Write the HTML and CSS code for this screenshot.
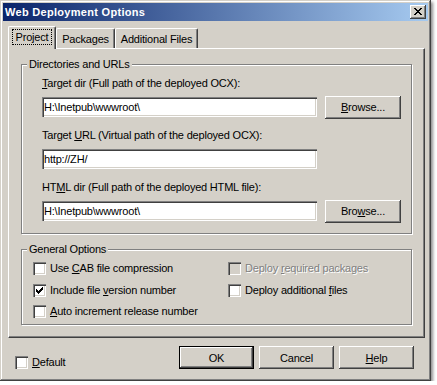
FILE: index.html
```html
<!DOCTYPE html>
<html lang="en">
<head>
  <meta charset="UTF-8" />
  <title>Web Deployment Options</title>
  <link rel="stylesheet" href="styles.css">
</head>
<body>
  <div class="window">
    <!-- Title bar -->
    <div class="titlebar">
      <span class="title">Web Deployment Options</span>
      <span class="close">
        <svg width="8" height="7" viewBox="0 0 8 7" shape-rendering="crispEdges">
          <path fill="#000" d="M0 0h2v1H0zM6 0h2v1H6zM1 1h2v1H1zM5 1h2v1H5zM2 2h4v1H2zM3 3h2v1H3zM2 4h4v1H2zM1 5h2v1H1zM5 5h2v1H5zM0 6h2v1H0zM6 6h2v1H6z"/>
        </svg>
      </span>
    </div>

    <div class="content">
      <!-- Tabs -->
      <div class="tabs">
        <div class="tab active"><span class="focus">Project</span></div>
        <div class="tab packages">Packages</div>
        <div class="tab files">Additional Files</div>
      </div>

      <div class="panel">
        <fieldset class="group dirs">
          <legend>Directories and URLs</legend>
          <div class="label"><u>T</u>arget dir (Full path of the deployed OCX):</div>
          <div class="row">
            <input class="textbox" type="text" value="H:\Inetpub\wwwroot\" readonly>
            <button class="btn"><u>B</u>rowse...</button>
          </div>
          <div class="label">Target <u>U</u>RL (Virtual path of the deployed OCX):</div>
          <div class="row">
            <input class="textbox" type="text" value="http://ZH/" readonly>
          </div>
          <div class="label">HT<u>M</u>L dir (Full path of the deployed HTML file):</div>
          <div class="row">
            <input class="textbox" type="text" value="H:\Inetpub\wwwroot\" readonly>
            <button class="btn">Bro<u>w</u>se...</button>
          </div>
        </fieldset>

        <fieldset class="group options">
          <legend>General Options</legend>
          <div class="checks">
            <label class="check"><span class="box"></span><span>Use <u>C</u>AB file compression</span></label>
            <label class="check disabled"><span class="box"></span><span>Deploy <u>r</u>equired packages</span></label>
            <label class="check">
              <span class="box">
                <svg width="13" height="13" viewBox="0 0 13 13" shape-rendering="crispEdges">
                  <path fill="#000" d="M3 5h1v3H3zM4 6h1v3H4zM5 7h1v3H5zM6 6h1v3H6zM7 5h1v3H7zM8 4h1v3H8zM9 3h1v3H9z"/>
                </svg>
              </span><span>Include file <u>v</u>ersion number</span>
            </label>
            <label class="check"><span class="box"></span><span>Deploy additional <u>f</u>iles</span></label>
            <label class="check"><span class="box"></span><span><u>A</u>uto increment release number</span></label>
          </div>
        </fieldset>
      </div>

      <!-- Bottom buttons -->
      <div class="footer">
        <label class="check default-check"><span class="box"></span><span><u>D</u>efault</span></label>
        <div class="buttons">
          <button class="btn default">OK</button>
          <button class="btn">Cancel</button>
          <button class="btn"><u>H</u>elp</button>
        </div>
      </div>
    </div>
  </div>
</body>
</html>
```
FILE: styles.css
```css
body {
  margin: 0;
  background: #ffffff;
  font-family: "Liberation Sans", Arial, sans-serif;
  font-size: 11px;
  letter-spacing: -0.2px;
  color: #000000;
}
.window {
  width: 431px;
  height: 381px;
  box-sizing: border-box;
  padding: 3px;
  background: #d4d0c8;
  display: flex;
  flex-direction: column;
  box-shadow: inset -1px -1px #404040, inset 1px 1px #d4d0c8,
              inset -2px -2px #808080, inset 2px 2px #ffffff,
              2px 2px 3px rgba(0, 0, 0, 0.45);
}
.titlebar {
  height: 18px;
  display: flex;
  align-items: center;
  justify-content: space-between;
  padding: 0 2px 0 2px;
  background: linear-gradient(to right, #0a246a, #a6caf0);
  color: #ffffff;
  font-weight: bold;
  letter-spacing: 0.3px;
}
.close {
  width: 16px;
  height: 14px;
  box-sizing: border-box;
  padding: 3px 0 0 4px;
  background: #d4d0c8;
  box-shadow: inset -1px -1px #404040, inset 1px 1px #ffffff,
              inset -2px -2px #808080, inset 2px 2px #d4d0c8;
}
.close svg { display: block; }
.content {
  flex: 1;
  display: flex;
  flex-direction: column;
  padding: 5px 3px 0 5px;
}

/* tabs */
.tabs {
  display: flex;
  align-items: flex-end;
  height: 22px;
  position: relative;
  z-index: 1;
}
.tab {
  height: 20px;
  box-sizing: border-box;
  padding-top: 4px;
  line-height: 13px;
  text-align: center;
  background: #d4d0c8;
  border-top: 1px solid #ffffff;
  border-left: 1px solid #ffffff;
  border-right: 1px solid #404040;
  border-radius: 2px 2px 0 0;
  box-shadow: inset -1px 0 #808080;
}
.tab.active {
  width: 48px;
  height: 23px;
  margin-bottom: -1px;
  padding-top: 2px;
}
.tab.packages { width: 59px; }
.tab.files { width: 83px; }
.focus {
  display: inline-block;
  border: 1px dotted #000000;
  padding: 1px 3px 0;
}

.panel {
  height: 290px;
  box-sizing: border-box;
  padding: 9px 12px 0 12px;
  background: #d4d0c8;
  border-top: 1px solid #ffffff;
  border-left: 1px solid #ffffff;
  border-right: 1px solid #404040;
  border-bottom: 1px solid #404040;
  box-shadow: inset -1px -1px #808080;
}

/* group boxes */
.group {
  margin: 0;
  min-width: 0;
  border: 1px solid #808080;
  box-shadow: 1px 1px 0 #ffffff, inset 1px 1px 0 #ffffff;
}
.group legend {
  padding: 0 2px;
  line-height: 13px;
  background: #d4d0c8;
}
.dirs { padding: 6px 10px 12px 20px; }
.dirs legend { margin-left: -15px; }
.options {
  margin-top: 9px;
  padding: 6px 10px 6px 11px;
}
.options legend { margin-left: -6px; }
.label {
  line-height: 13px;
  margin-bottom: 7px;
}
.row {
  display: flex;
  align-items: center;
  gap: 8px;
  height: 20px;
  margin-bottom: 12px;
}
.row:last-child { margin-bottom: 0; }
.textbox {
  width: 275px;
  height: 20px;
  margin: 0;
  box-sizing: border-box;
  border: 0;
  padding: 0 2px;
  font: inherit;
  letter-spacing: inherit;
  color: #000000;
  background: #ffffff;
  outline: none;
  box-shadow: inset 1px 1px #808080, inset 2px 2px #404040,
              inset -1px -1px #ffffff, inset -2px -2px #d4d0c8;
}
.btn {
  width: 76px;
  height: 23px;
  margin: 0;
  padding: 0;
  border: 0;
  font: inherit;
  letter-spacing: inherit;
  color: #000000;
  background: #d4d0c8;
  box-shadow: inset -1px -1px #404040, inset 1px 1px #ffffff,
              inset -2px -2px #808080, inset 2px 2px #d4d0c8;
}

/* checkboxes */
.checks {
  display: grid;
  grid-template-columns: 195px auto;
  grid-auto-rows: 13px;
  row-gap: 8.5px;
}
.check {
  display: flex;
  align-items: center;
  height: 13px;
  line-height: 13px;
}
.box {
  width: 13px;
  height: 13px;
  flex: none;
  margin-right: 4px;
  box-sizing: border-box;
  background: #ffffff;
  box-shadow: inset 1px 1px #808080, inset 2px 2px #404040,
              inset -1px -1px #ffffff, inset -2px -2px #d4d0c8;
}
.box svg { display: block; }
.check.disabled {
  color: #808080;
  text-shadow: 1px 1px 0 #ffffff;
}
.check.disabled .box { background: #d4d0c8; }

/* footer */
.footer {
  display: flex;
  justify-content: space-between;
  align-items: flex-start;
  margin-top: 8px;
  padding: 0 11px 0 7px;
}
.default-check { margin-top: 10px; }
.buttons {
  display: flex;
  gap: 5px;
}
.buttons .btn { width: 75px; }
.btn.default {
  border: 1px solid #000000;
}
```
